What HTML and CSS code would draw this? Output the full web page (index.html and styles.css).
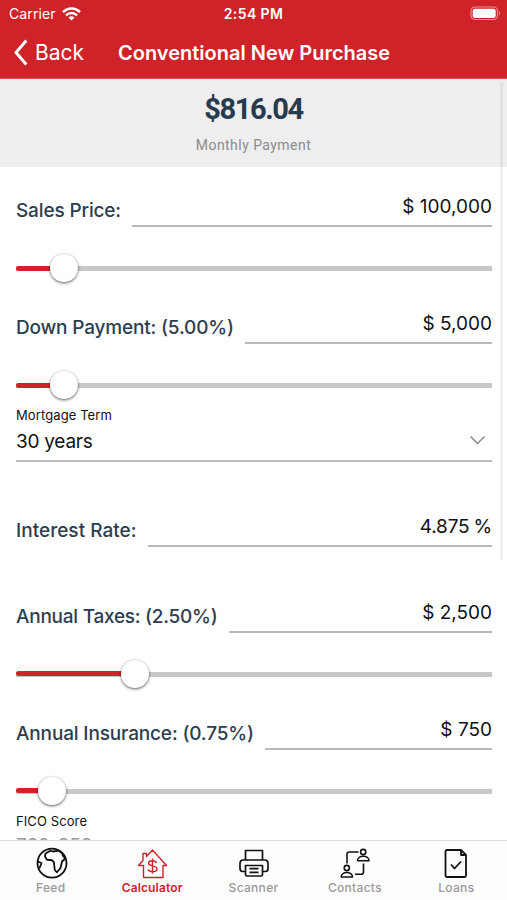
FILE: index.html
```html
<!DOCTYPE html>
<html lang="en">
<head>
<meta charset="utf-8">
<title>Conventional New Purchase</title>
<link rel="stylesheet" href="styles.css">
</head>
<body>
<div class="app">
  <header class="header">
    <div class="status">
      <div class="carrier"><span>Carrier</span>
        <svg class="wifi" width="19" height="14" viewBox="0 0 19 14" fill="none" stroke="#fff" stroke-width="2.4"><path d="M1 5.2C6 0.2 13 0.2 18 5.2M4 8.3C7.2 5.2 11.8 5.2 15 8.3"/><path d="M6.500 10.500Q9.500 8 12.500 10.500L9.500 13.500Z" fill="#fff" stroke="none"/></svg>
      </div>
      <span class="time">2:54 PM</span>
      <svg class="battery" width="31" height="15" viewBox="0 0 31 15"><rect x="1" y="1" width="26.500" height="12.500" rx="3.800" fill="none" stroke="#ee8d90" stroke-width="1.200"/><rect x="2.700" y="2.700" width="23" height="9.200" rx="2.200" fill="#fff"/><path d="M29 5Q31 7.200 29 9.500Z" fill="#ee8d90"/></svg>
    </div>
    <nav class="nav">
      <a class="back"><svg width="15" height="27" viewBox="0 0 15 27" fill="none" stroke="#fff" stroke-width="3"><path d="M13.300 1.500L3 13.500L13.300 25.500"/></svg><span>Back</span></a>
      <h1 class="title">Conventional New Purchase</h1>
    </nav>
  </header>
  <main class="content">
    <section class="summary">
      <div class="amount">$816.04</div>
      <div class="caption">Monthly Payment</div>
    </section>
    <form class="form">
      <div class="field"><label class="sales">Sales Price:</label><div class="value">$ 100,000</div></div>
      <div class="slider"><div class="fill" style="width:10%"></div><div class="knob"></div></div>
      <div class="field"><label class="down">Down Payment: (5.00%)</label><div class="value">$ 5,000</div></div>
      <div class="slider"><div class="fill" style="width:10%"></div><div class="knob"></div></div>
      <div class="select">
        <span class="small">Mortgage Term</span>
        <div class="choice"><span>30 years</span><svg width="17" height="10" viewBox="0 0 17 10" fill="none" stroke="#8b8b8b" stroke-width="1.500"><path d="M1.500 0.500L8.500 7.500L15.500 0.500"/></svg></div>
      </div>
      <div class="field spaced"><label class="rate">Interest Rate:</label><div class="value percent">4.875 %</div></div>
      <div class="field spaced"><label class="taxes">Annual Taxes: (2.50%)</label><div class="value">$ 2,500</div></div>
      <div class="slider"><div class="fill" style="width:25%"></div><div class="knob"></div></div>
      <div class="field"><label class="insurance">Annual Insurance: (0.75%)</label><div class="value">$ 750</div></div>
      <div class="slider"><div class="fill" style="width:7.500%"></div><div class="knob"></div></div>
      <span class="small fico">FICO Score</span>
      <div class="score">760-850</div>
    </form>
    <div class="scrollbar"></div>
  </main>
  <footer class="tabs">
    <a class="tab"><svg width="34" height="34" viewBox="0 0 34 34" fill="none" stroke="#111" stroke-width="1.800" stroke-linejoin="round"><circle cx="18" cy="17.200" r="14.500"/><path d="M11.500 7.500L16.300 4.700L19 5.500L24.600 4.700L28 7L29 10L31.300 12.500L28 15.500L26.500 22L23 26.300L20.800 24L19.800 16L17.500 14L13 13.800L11 10.500ZM3.800 15.500L7.500 17L5.800 21.500L4.300 22"/></svg><span>Feed</span></a>
    <a class="tab active"><svg width="34" height="34" viewBox="0 0 34 34" fill="none" stroke="currentColor" stroke-width="1.400" stroke-linejoin="round"><path d="M17.500 4L31.500 19.500H28V31.500H8.500V19.500H3.500L8 14.500V7.500H11.500V10.500ZM17.500 12.500V27.500M21.500 17C20.500 14 13.500 14 13.500 17.200C13.500 20.800 22 19 22 23C22 26.500 14.500 26.500 13 23.500"/></svg><span>Calculator</span></a>
    <a class="tab"><svg width="34" height="34" viewBox="0 0 34 34" fill="none" stroke="#111" stroke-width="1.700" stroke-linejoin="round"><path d="M8.500 14V4.500H25.500V14M8.500 25.500H5.500Q3 25.500 3 22.500V17.500Q3 14 6 14H28Q31 14 31 17.500V22.500Q31 25.500 28.500 25.500H25.500M8.500 19.500H25.500V28.500Q25.500 30 24 30H10Q8.500 30 8.500 28.500ZM12.500 22.700H21.500M12.500 26.300H21.500"/></svg><span>Scanner</span></a>
    <a class="tab"><svg width="34" height="34" viewBox="0 0 34 34" fill="none" stroke="#111" stroke-width="1.600" stroke-linejoin="round"><circle cx="25.200" cy="6" r="2.600"/><path d="M19.500 14.800C19.500 8.800 31 8.800 31 14.800Z"/><circle cx="8.800" cy="22" r="2.600"/><path d="M3.200 31C3.200 25 14.500 25 14.500 31ZM9 17.500V8Q9 6 11.500 6H20.500M25.500 17.500V26Q25.500 28.300 23 28.300H17"/></svg><span>Contacts</span></a>
    <a class="tab"><svg width="34" height="34" viewBox="0 0 34 34" fill="none" stroke="#111" stroke-width="1.800" stroke-linejoin="round"><path d="M22 4H8Q6.500 4 6.500 5.500V29.500Q6.500 31 8 31H25.500Q27 31 27 29.500V9ZM22 4V9H27M12 18.500L15.500 22.500L22 15.500"/></svg><span>Loans</span></a>
  </footer>
</div>
</body>
</html>
```
FILE: styles.css
```css
* { box-sizing: border-box; }
body { margin: 0; background: #fff; font-family: Inter, "Liberation Sans", sans-serif; }
.app { display: flex; flex-direction: column; width: 507px; height: 900px; overflow: hidden; }
.header { flex: none; height: 79px; background: #cf2329; border-bottom: 1px solid #dc4c50; color: #fff; }
.status { display: grid; grid-template-columns: 1fr auto 1fr; align-items: center; height: 27px; padding: 0 6px 0 9px; font-size: 14px; }
.carrier { display: flex; align-items: center; gap: 6px; letter-spacing: 0.100px; }
.time { font-weight: 600; letter-spacing: 0.400px; margin-right: 3px; }
.battery { justify-self: end; }
.nav { display: flex; align-items: center; height: 51px; padding-left: 13px; }
.back { display: flex; align-items: center; gap: 7px; width: 105px; font-size: 21px; }
.title { margin: 0; font-size: 20px; font-weight: 600; white-space: nowrap; }
.content { position: relative; flex: none; height: 761px; overflow: hidden; }
.summary { height: 88px; padding-top: 12px; background: #eee; text-align: center; font-family: Roboto, sans-serif; }
.amount { color: #263b50; font-size: 29px; line-height: 36px; font-weight: 700; letter-spacing: -1.400px; }
.caption { margin-top: 9px; color: #8b8b8b; font-size: 14px; line-height: 18px; letter-spacing: 0.450px; }
.form { padding: 22px 15px 0 16px; }
.field { display: flex; align-items: stretch; gap: 11px; height: 38px; }
.field label { color: #2d3d51; font-size: 19px; line-height: 44px; font-weight: 500; white-space: nowrap; }
.field .sales { letter-spacing: -0.150px; }
.field .down { letter-spacing: -0.170px; }
.field .rate { letter-spacing: 0.030px; }
.field .taxes { letter-spacing: -0.250px; }
.field .insurance { letter-spacing: -0.150px; }
.spaced { margin-top: 47.500px; }
.value { flex: 1; border-bottom: 2px solid #b9b9b9; color: #111; font-size: 19px; line-height: 36px; text-align: right; white-space: nowrap; }
.percent { letter-spacing: -0.200px; word-spacing: -1px; }
.slider { display: flex; align-items: center; height: 79.300px; padding-top: 3px; background: linear-gradient(#c8c8c8, #c8c8c8) center 39px / 100% 5px no-repeat; }
.fill { height: 5px; border-radius: 3px; background: #cf2329; }
.knob { flex: none; width: 28px; height: 28px; margin-left: -14px; border-radius: 50%; background: #fff; box-shadow: 0 1px 3px rgba(0,0,0,.65); }
.select { height: 55.500px; margin-top: -17.600px; border-bottom: 2px solid #bdbdbd; }
.small { display: block; color: #111; font-size: 13px; line-height: 18px; letter-spacing: 0.100px; }
.choice { display: flex; justify-content: space-between; align-items: center; height: 34px; padding-right: 6px; font-size: 19px; letter-spacing: -0.250px; color: #111; }
.fico { margin-top: -17px; }
.score { margin-top: 4px; color: #999; font-size: 19px; line-height: 24px; letter-spacing: -0.300px; }
.scrollbar { position: absolute; top: 3px; right: 4px; width: 3px; height: 478px; background: rgba(0,0,0,.05); }
.tabs { display: flex; flex: none; height: 60px; border-top: 1px solid #ddd; background: #fdfdfd; }
.tab { display: flex; flex: 1; flex-direction: column; align-items: center; padding-top: 5px; color: #999; font-size: 12px; font-weight: 500; line-height: 15px; letter-spacing: 0.300px; }
.active { color: #cf2329; font-weight: 600; letter-spacing: 0.150px; }
```
